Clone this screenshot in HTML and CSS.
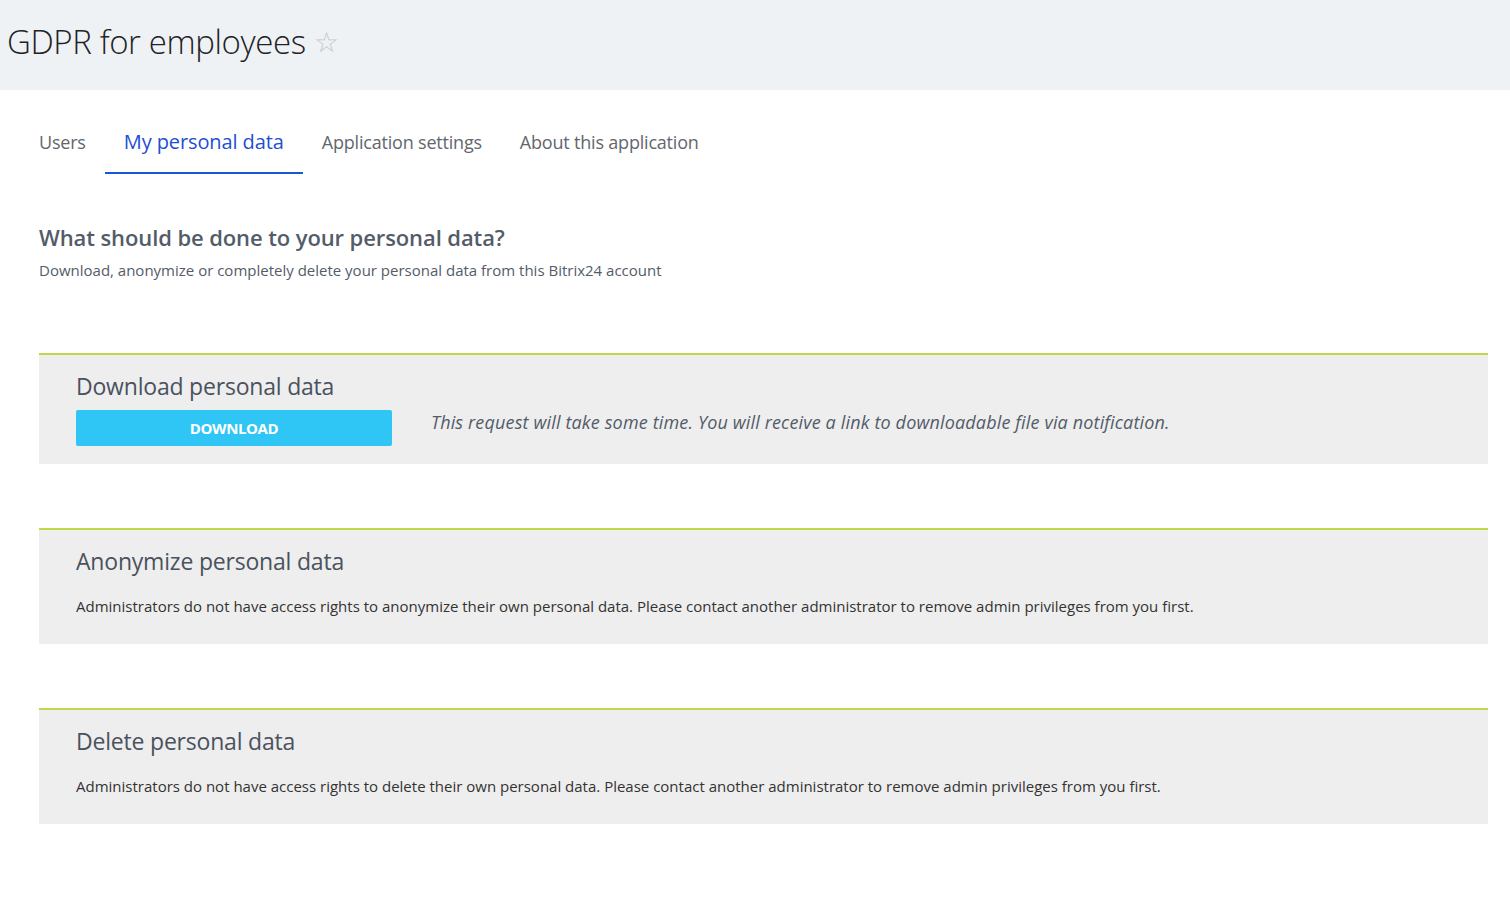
FILE: index.html
```html
<!DOCTYPE html>
<html lang="en">
<head>
<meta charset="utf-8">
<title>GDPR for employees</title>
<link rel="stylesheet" href="styles.css">
</head>
<body>
<header class="page-header">
  <h1 class="page-title">GDPR for employees <span class="star">&#9734;</span></h1>
</header>
<nav class="tabs">
  <a class="tab">Users</a>
  <a class="tab active">My personal data</a>
  <a class="tab">Application settings</a>
  <a class="tab">About this application</a>
</nav>
<main class="content">
  <h2 class="question">What should be done to your personal data?</h2>
  <p class="subtitle">Download, anonymize or completely delete your personal data from this Bitrix24 account</p>

  <section class="panel panel-first">
    <h3 class="panel-title">Download personal data</h3>
    <div class="download-row">
      <button class="btn-download">DOWNLOAD</button>
      <p class="note">This request will take some time. You will receive a link to downloadable file via notification.</p>
    </div>
  </section>

  <section class="panel">
    <h3 class="panel-title">Anonymize personal data</h3>
    <p class="panel-text">Administrators do not have access rights to anonymize their own personal data. Please contact another administrator to remove admin privileges from you first.</p>
  </section>

  <section class="panel">
    <h3 class="panel-title">Delete personal data</h3>
    <p class="panel-text">Administrators do not have access rights to delete their own personal data. Please contact another administrator to remove admin privileges from you first.</p>
  </section>
</main>
</body>
</html>
```

FILE: styles.css
```css
* { box-sizing: border-box; }
html, body { margin: 0; padding: 0; background: #fff; }
body { font-family: "Open Sans", "Liberation Sans", sans-serif; color: #535c69; }

.page-header {
  height: 90px;
  background: #eef2f4;
  padding: 20px 0 0 7px;
}
.page-title {
  margin: 0;
  font-size: 33px;
  line-height: 42px;
  font-weight: 300;
  color: #1f2328;
  letter-spacing: -0.4px;
}
.star {
  font-size: 28px;
  color: #c4c7cb;
  font-weight: 400;
  vertical-align: 2px;
}

.tabs {
  display: flex;
  padding-left: 20px;
}
.tab {
  padding: 40px 19px 18px;
  font-size: 18px;
  line-height: 24px;
  color: #62676e;
  border-bottom: 2px solid transparent;
  letter-spacing: -0.2px;
}
.tab.active {
  font-size: 20px;
  color: #1d4fd0;
  border-bottom-color: #1a57d2;
  letter-spacing: -0.1px;
}

.content {
  padding: 0 22px 60px 39px;
}
.question {
  margin: 48px 0 0;
  font-size: 22px;
  line-height: 30px;
  font-weight: 600;
  color: #535c69;
  letter-spacing: -0.1px;
}
.subtitle {
  margin: 8px 0 0;
  font-size: 15px;
  line-height: 20px;
  color: #535c69;
}

.panel {
  margin-top: 64px;
  background: #eeeeee;
  border-top: 2px solid #bcd94a;
  padding: 16px 37px 28px;
}
.panel-first {
  margin-top: 73px;
  padding-bottom: 18px;
}
.panel-title {
  margin: 0;
  font-size: 23px;
  line-height: 30px;
  font-weight: 400;
  color: #4a525e;
  letter-spacing: -0.2px;
}
.download-row {
  display: flex;
  align-items: flex-start;
  gap: 39px;
  margin-top: 9px;
}
.btn-download {
  width: 316px;
  height: 36px;
  border: 0;
  border-radius: 2px;
  background: #2fc6f6;
  color: #fff;
  font-family: "Open Sans", "Liberation Sans", sans-serif;
  font-size: 15px;
  font-weight: 700;
  letter-spacing: -0.4px;
  padding: 0;
}
.note {
  margin: 0;
  font-size: 18px;
  line-height: 24px;
  font-style: italic;
  color: #535c69;
  letter-spacing: 0.15px;
}
.panel-text {
  margin: 20px 0 0;
  font-size: 15px;
  line-height: 20px;
  color: #333;
}
```
